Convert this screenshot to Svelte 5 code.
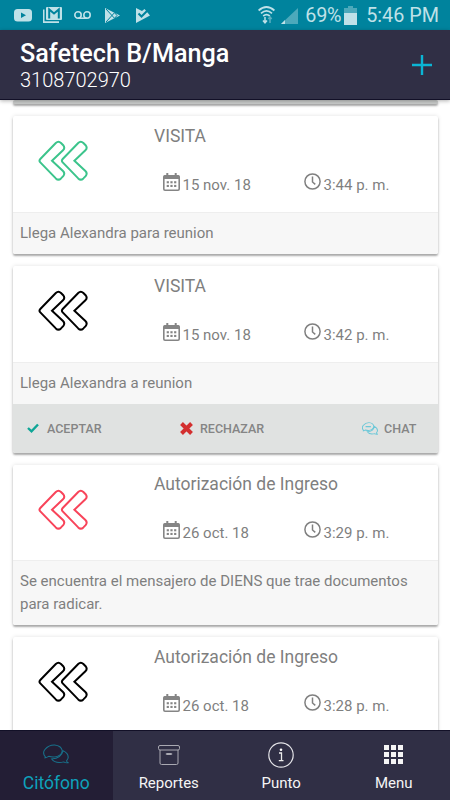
<script>
  const cards = [
    {
      title: "VISITA",
      date: "15 nov. 18",
      time: "3:44 p. m.",
      text: "Llega Alexandra para reunion",
      color: "#3cc48c",
    },
    {
      title: "VISITA",
      date: "15 nov. 18",
      time: "3:42 p. m.",
      text: "Llega Alexandra a reunion",
      color: "#000",
      actions: true,
    },
    {
      title: "Autorización de Ingreso",
      date: "26 oct. 18",
      time: "3:29 p. m.",
      text: "Se encuentra el mensajero de DIENS que trae documentos para radicar.",
      color: "#f8445a",
    },
    {
      title: "Autorización de Ingreso",
      date: "26 oct. 18",
      time: "3:28 p. m.",
      text: "",
      color: "#000",
    },
  ];

  const chevron =
    "M2.3 19 17.8 3Q20.4.6 23 3L25.2 5.2Q27.4 8 25 10.3L14 20.7 25 31.1Q27.4 33.4 25.2 36.2L23 38.4Q20.4 40.8 17.8 38.4L2.3 22.4Q.7 20.7 2.3 19Z";
  const dots = [0, 1, 2];

  let tabs = ["Citófono", "Reportes", "Punto", "Menu"];
  let active = "Citófono";
</script>

{#snippet bubbles()}
  <path d="M2.5 15.5Q-1 11 2 6.5 6 1 12 1.200 19 2 20 8 19.500 14 12.500 15.500 9 16 6 14.700 4 16.500 1.500 16.800 3 16.500 2.500 15.500Z" />
  <path d="M20.800 8Q27 11.500 26 17 25.500 18.500 24.500 20 24.500 21.500 26 22.500 23.500 23 21.500 21.500 13 24 9 18Q19 17.500 20.800 8Z" />
{/snippet}

<div class="app">
  <div class="status">
    <div class="notices">
      <svg class="youtube" width="18" height="13" viewBox="0 0 18 13">
        <rect width="18" height="12.500" rx="3.500" />
        <path class="cut" d="M7 3.500 12 6.300 7 9Z" />
      </svg>
      <svg class="gmail" width="19" height="16" viewBox="0 0 19 16">
        <path d="M0 2.500H1.500V14.300H16V16H0Z" />
        <rect x="3" width="16" height="13" rx="1" />
        <path class="line" d="M6.200 11.500V2.500L11 6.500 15.800 2.500V11.500" />
      </svg>
      <svg class="voicemail" width="17" height="8" viewBox="0 0 17 8">
        <g fill="none" stroke="#bfe1e8" stroke-width="1.600">
          <circle cx="4" cy="4" r="3.200" />
          <circle cx="13" cy="4" r="3.200" />
          <path d="M4 7.200H13" />
        </g>
      </svg>
      <svg class="play" width="15" height="15" viewBox="0 0 15 15">
        <path d="M0 0 15 7.500 0 15Z" />
        <path class="line thin" d="M1 1 9.500 10.300M1 14 9.500 4.700M9.500 4.700 12 7.500 9.500 10.300" />
      </svg>
      <svg class="check" width="14" height="15" viewBox="0 0 14 15">
        <path d="M0 0 6 3 8.500 1 14 7.500 0 15Z" />
        <path class="line" d="M2.500 5.500 5.500 8.500 12 2" />
      </svg>
    </div>
    <div class="system">
      <svg class="wifi" width="17" height="18" viewBox="0 0 17 18">
        <g fill="none" stroke="#bfe1e8" stroke-width="1.700">
          <path d="M.6 4.500Q8.500-2.500 16.400 4.500M3 7.400Q8.500 2.500 14 7.400M5.200 10Q8.500 7.200 11.800 10" />
          <path stroke-width="1.500" d="M7 11V17M5 14.500 7 16.800 9 14.500" />
          <path stroke="#5bafc0" stroke-width="1.500" d="M12 17V11M10.300 13 12 11 13.700 13" />
        </g>
      </svg>
      <svg class="signal" width="17" height="16" viewBox="0 0 17 16">
        <path fill="#4ca9bb" d="M17 0V16H0Z" />
        <path d="M4 12V16H0Z" />
      </svg>
      <span class="percent">69%</span>
      <svg class="battery" width="13" height="19" viewBox="0 0 13 19">
        <path fill="#4ca9bb" d="M4 0H9V2H13V8H0V2H4Z" />
        <path d="M0 7H13V19H0Z" />
      </svg>
      <span class="clock">5:46 PM</span>
    </div>
  </div>

  <header>
    <div>
      <h1>Safetech B/Manga</h1>
      <div class="phone">3108702970</div>
    </div>
    <svg class="plus" width="20" height="20" viewBox="0 0 20 20">
      <path d="M10 0V20M0 10H20" stroke="#0bb5d4" stroke-width="2.400" />
    </svg>
  </header>

  <main>
    <div class="card previous"></div>
    {#each cards as card}
      <div class="card">
        <div class="body">
          <svg class="direction" width="51" height="42" viewBox="0 0 51 42" fill="none" stroke={card.color} stroke-width="2">
            <path d={chevron} />
            <path d={chevron} transform="translate(22.400 0)" />
          </svg>
          <div class="info">
            <div class="title">{card.title}</div>
            <div class="when">
              <div class="date">
                <svg width="17" height="18" viewBox="0 0 17 18">
                  <path fill="none" stroke="#858585" stroke-width="1.600" d="M1.800 2.800H15.200Q16.200 2.800 16.200 3.800V16Q16.200 17.200 15 17.200H2Q.8 17.200.8 16V3.800Q.8 2.800 1.800 2.800Z" />
                  <path fill="#858585" d="M1 2.500H16V6H1ZM3.300 0H5.300V3H3.300ZM11.700 0H13.700V3H11.700Z" />
                  {#each dots as x}
                    <rect x={3.7 + x * 3.7} y="8.200" width="2.200" height="2.100" fill="#858585" />
                    <rect x={3.7 + x * 3.7} y="11.900" width="2.200" height="2.100" fill="#858585" />
                  {/each}
                </svg>
                <span>{card.date}</span>
              </div>
              <div class="time">
                <svg width="17" height="17" viewBox="0 0 17 17" fill="none" stroke="#808080" stroke-width="1.500">
                  <circle cx="8.500" cy="8.500" r="7.600" />
                  <path d="M8.500 3.500V9L11.300 11.300" />
                </svg>
                <span>{card.time}</span>
              </div>
            </div>
          </div>
        </div>
        <div class="text">{card.text}</div>
        {#if card.actions}
          <div class="actions">
            <div class="action">
              <svg width="12" height="10" viewBox="0 0 12 10">
                <path d="M1 5 4.500 8.300 11 1.500" fill="none" stroke="#0fa697" stroke-width="2.400" />
              </svg>
              ACEPTAR
            </div>
            <div class="action reject">
              <svg width="13" height="13" viewBox="0 0 13 13">
                <path d="M1.500 1.500 11.500 11.500M11.500 1.500 1.500 11.500" stroke="#d32f2f" stroke-width="4" />
              </svg>
              RECHAZAR
            </div>
            <div class="action chat">
              <svg width="16" height="13" viewBox="0 0 27 24" preserveAspectRatio="none" fill="none" stroke="#6cc8d8" stroke-width="1.700">
                {@render bubbles()}
                <path d="M6 8.500H15" stroke-width="2.500" />
              </svg>
              CHAT
            </div>
          </div>
        {/if}
      </div>
    {/each}
  </main>

  <nav>
    {#each tabs as tab}
      <div class="tab" class:active={tab === active}>
        <div class="icon">
          {#if tab === "Citófono"}
            <svg width="26" height="20" viewBox="0 0 27 24" preserveAspectRatio="none" fill="none" stroke="#18718b" stroke-width="1.100">
              {@render bubbles()}
            </svg>
          {:else if tab === "Reportes"}
            <svg width="22" height="20" viewBox="0 0 22 20" fill="none" stroke="#a9a9b2" stroke-width="1">
              <rect x=".5" y=".5" width="21" height="4.500" rx="1.500" />
              <path d="M2 5V18Q2 19.500 3.500 19.500H18.500Q20 19.500 20 18V5" />
              <rect x="8" y="8.500" width="6" height="1" rx=".5" />
            </svg>
          {:else if tab === "Punto"}
            <svg width="26" height="26" viewBox="0 0 26 26">
              <circle cx="13" cy="13" r="12.200" fill="none" stroke="#e4e4e8" stroke-width="1.200" />
              <circle cx="13" cy="7.800" r="1.300" fill="#fff" />
              <path d="M11 11H13.500V18.500M10.800 18.700H15.500" fill="none" stroke="#eee" stroke-width="1.300" />
            </svg>
          {:else}
            <svg width="19" height="19" viewBox="0 0 19 19" fill="#f5f5f5">
              {#each dots as x}
                {#each dots as y}
                  <rect x={x * 7} y={y * 7} width="5" height="5" />
                {/each}
              {/each}
            </svg>
          {/if}
        </div>
        <div class="label">{tab}</div>
      </div>
    {/each}
  </nav>
</div>

<style>
  :global(body) {
    background: #fff;
    overflow: hidden;
  }
  svg {
    display: block;
    flex: none;
  }
  .app {
    width: 450px;
    height: 800px;
    display: flex;
    flex-direction: column;
    overflow: hidden;
    font-family: Roboto, "Liberation Sans", sans-serif;
    color: #7f7f7f;
  }

  .status {
    flex: none;
    box-sizing: border-box;
    height: 30px;
    padding: 0 11px 0 14px;
    display: flex;
    justify-content: space-between;
    background: #00839d;
    color: #bfe1e8;
    fill: #bfe1e8;
  }
  .notices,
  .system {
    display: flex;
    align-items: center;
  }
  .cut {
    fill: #00839d;
  }
  .line {
    fill: none;
    stroke: #00839d;
    stroke-width: 2;
  }
  .thin {
    stroke-width: 1;
  }
  .gmail {
    margin-left: 11px;
  }
  .voicemail {
    margin-left: 12px;
  }
  .play {
    margin-left: 14px;
  }
  .check {
    margin-left: 16px;
  }
  .signal {
    margin: 1px 7px 0 6px;
  }
  .percent,
  .clock {
    font-size: 19.8px;
    line-height: 30px;
    padding-top: 1px;
  }
  .percent {
    letter-spacing: -0.3px;
  }
  .battery {
    margin: 0 9px 0 3px;
  }

  header {
    flex: none;
    box-sizing: border-box;
    height: 70px;
    padding: 9px 18px 0 20px;
    display: flex;
    justify-content: space-between;
    background: #302f45;
    border-bottom: 1px solid #121027;
    color: #fff;
    position: relative;
    box-shadow: 0 1px 4px rgba(0, 0, 0, 0.3);
  }
  h1 {
    margin: 0;
    font-size: 25.2px;
    font-weight: 500;
    line-height: 30px;
  }
  .phone {
    font-size: 20px;
    font-weight: 300;
    line-height: 23px;
  }
  .plus {
    margin-top: 15.5px;
  }

  main {
    flex: 1;
    min-height: 0;
    overflow: hidden;
    padding: 0 12.5px;
  }
  .card {
    margin-bottom: 12px;
    background: #fff;
    border-radius: 2px;
    box-shadow:
      0 2px 2px rgba(0, 0, 0, 0.3),
      0 0 4px rgba(0, 0, 0, 0.12);
    overflow: hidden;
  }
  .previous {
    height: 4px;
    background: #c9cbca;
  }
  .body {
    box-sizing: border-box;
    height: 95.5px;
    padding-left: 25px;
    display: flex;
  }
  .direction {
    margin-top: 24px;
  }
  .info {
    margin-left: 65.5px;
    padding-top: 7.5px;
  }
  .title {
    font-size: 17.500px;
    line-height: 24px;
  }
  .when {
    display: flex;
    margin-top: 25px;
    padding-left: 9px;
    font-size: 15px;
    line-height: 24px;
  }
  .date,
  .time {
    display: flex;
  }
  .date {
    width: 141px;
  }
  .date span,
  .time span {
    margin-left: 2.5px;
  }
  .text {
    border-top: 1px solid #eee;
    padding: 9px 7.5px 10px;
    background: #f7f7f7;
    font-size: 15px;
    line-height: 22.500px;
    min-height: 22.500px;
  }
  .actions {
    box-sizing: border-box;
    height: 48.5px;
    display: flex;
    align-items: center;
    padding-left: 14.5px;
    background: #e0e2e1;
    color: #858585;
    font-size: 12.500px;
    font-weight: 500;
  }
  .action {
    display: flex;
    align-items: center;
    gap: 8px;
    width: 153px;
  }
  .reject {
    gap: 7px;
    width: 182px;
  }
  .chat {
    gap: 6px;
    width: auto;
  }

  nav {
    flex: none;
    box-sizing: border-box;
    height: 70px;
    border-top: 1px solid #121027;
    display: flex;
    background: #302f45;
    color: #f5f5f5;
    position: relative;
  }
  .tab {
    flex: 1;
    text-align: center;
  }
  .icon {
    height: 41px;
    padding-top: 3px;
    display: flex;
    align-items: center;
    justify-content: center;
  }
  .active .icon {
    height: 39px;
    padding-bottom: 2px;
  }
  .label {
    font-size: 15px;
    line-height: 16px;
  }
  .active {
    background: #231e35;
    color: #0ea2bb;
  }
  .active .label {
    font-size: 17.5px;
  }
</style>
